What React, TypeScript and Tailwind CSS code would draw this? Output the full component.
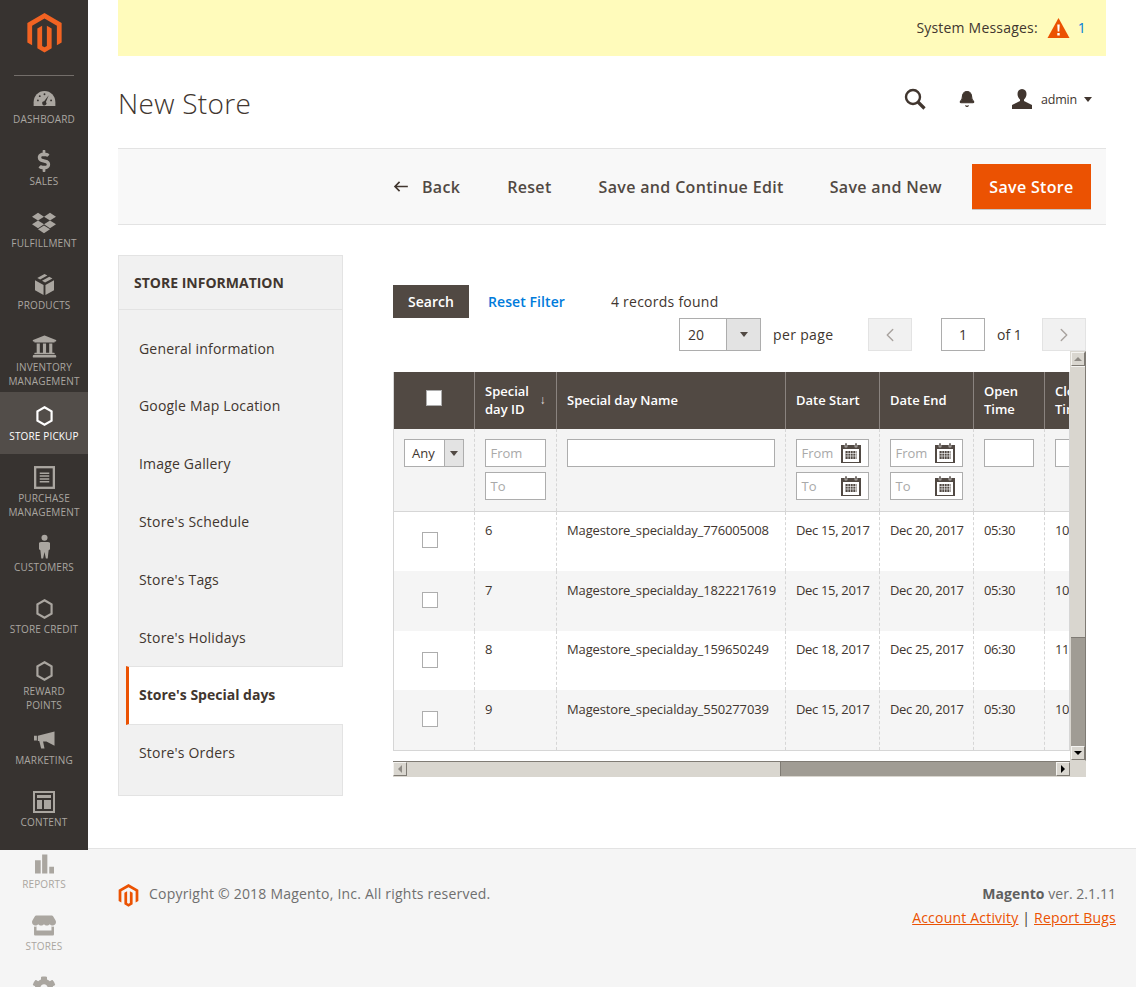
import { ReactNode } from "react";
import { FaCog, FaDollarSign, FaDropbox, FaStore, FaUniversity } from "react-icons/fa";
import { Bell, ChevronLeft, ChevronRight } from "lucide-react";

const font = "font-['Open_Sans',sans-serif]";

function MagentoLogo({ className }: { className: string }) {
  return (
    <svg viewBox="0 0 36 42" className={className} fill="#f26322">
      <polygon points="18,0 36,10.4 36,31 31,33.9 31,13.3 18,5.8 5,13.3 5,33.9 0,31 0,10.4" />
      <polygon points="20.5,34.6 18,36 15.5,34.6 15.5,13.3 10.5,16.2 10.5,37 18,41.6 25.5,37 25.5,16.2 20.5,13.3" />
    </svg>
  );
}

function Hex() {
  return (
    <svg viewBox="0 0 20 24" className="w-[17px] h-[20px]" fill="none" stroke="currentColor" strokeWidth="2.6">
      <polygon points="10,1.5 18.5,6.5 18.5,17.5 10,22.5 1.5,17.5 1.5,6.5" />
    </svg>
  );
}

function Gauge() {
  return (
    <svg viewBox="0 0 24 18" className="w-[23px] h-[17px]" fill="currentColor">
      <path d="M12 1C5.4 1 .5 6.2.5 13v4h23v-4C23.5 6.2 18.6 1 12 1z" />
      <g fill="#373330">
        <circle cx="5" cy="11" r="1" />
        <circle cx="7" cy="6.5" r="1" />
        <circle cx="12" cy="4.5" r="1" />
        <circle cx="19" cy="11" r="1" />
        <path d="M16.5 5.5l-3 7.2a2.2 2.2 0 1 1-1.9-.8z" />
      </g>
    </svg>
  );
}

function BoxIcon() {
  return (
    <svg viewBox="0 0 20 22" className="w-[19px] h-[21px]" fill="currentColor">
      <path d="M10 0l3 1.6-7.6 4.2-3-1.6zM15 2.8l3.4 1.8L10.6 9 7.4 7zM0 6.4l9 5V22l-9-5zM20 6.4V17l-9 5V11.400z" />
    </svg>
  );
}

function PurchaseIcon() {
  return (
    <svg viewBox="0 0 22 24" className="w-[21px] h-[23px]" fill="none" stroke="currentColor">
      <rect x="1.2" y="1.2" width="19.600" height="21.600" strokeWidth="2.4" />
      <path d="M6 7.500h10M6 10.500h10M6 13.500h10M6 16.500h10" strokeWidth="1.500" />
    </svg>
  );
}

function PersonIcon() {
  return (
    <svg viewBox="0 0 12 26" className="w-[11px] h-[25px]" fill="currentColor">
      <circle cx="6" cy="3.500" r="3.300" />
      <path d="M2 8h8l2 1v7l-1.500 1-1 9H7.500L6 19l-1.500 7H2.500l-1-9L0 16V9z" />
    </svg>
  );
}

function MegaphoneIcon() {
  return (
    <svg viewBox="0 0 22 18" className="w-[21px] h-[18px]" fill="currentColor">
      <path d="M0 4.500h3v5H0zM4 4.500L21.500 0v15L13 10.500H9.500L11 18H7.500L5.500 10H4z" />
    </svg>
  );
}

function ContentIcon() {
  return (
    <svg viewBox="0 0 22 22" className="w-[22px] h-[22px]" fill="currentColor">
      <path fillRule="evenodd" d="M0 0h22v22H0zM2 2v18h18V2z" />
      <path d="M4 4h14v3H4zM4 9h5v9H4zM11 9h7v9h-7z" />
    </svg>
  );
}

function ReportsIcon() {
  return (
    <svg viewBox="0 0 20 20" className="w-[19px] h-[20px]" fill="currentColor">
      <path d="M0 6h6v14H0zM7.500 0h5.500v20H7.500zM15 13h5v7h-5z" />
    </svg>
  );
}

function SearchGlyph() {
  return (
    <svg viewBox="0 0 22 22" className="w-[22px] h-[22px]" fill="none" stroke="#41362f">
      <circle cx="9" cy="9" r="7" strokeWidth="2.400" />
      <path d="M14 14l6.500 6.500" strokeWidth="3.200" />
    </svg>
  );
}

function Calendar() {
  return (
    <svg viewBox="0 0 20 20" className="w-[20px] h-[20px] shrink-0" fill="#514943">
      <path d="M0 2h20v19H0z" />
      <rect x="2" y="6" width="16" height="13" fill="#fff" />
      <rect x="4" y="0" width="2" height="4" fill="#514943" stroke="#fff" strokeWidth="0.5" />
      <rect x="14" y="0" width="2" height="4" fill="#514943" stroke="#fff" strokeWidth="0.5" />
      <path d="M4.500 8h11v8h-11z" />
      <path d="M7 8v8M9.500 8v8M12 8v8M14.500 8v8M4.500 10.500h11M4.500 13h11" stroke="#fff" strokeWidth="0.6" />
    </svg>
  );
}

const navItems: { label: string[]; icon: ReactNode; active?: boolean }[] = [
  { label: ["Dashboard"], icon: <Gauge /> },
  { label: ["Sales"], icon: <FaDollarSign className="w-[20px] h-[22px]" /> },
  { label: ["Fulfillment"], icon: <FaDropbox className="w-[24px] h-[24px]" /> },
  { label: ["Products"], icon: <BoxIcon /> },
  { label: ["Inventory", "Management"], icon: <FaUniversity className="w-[25px] h-[25px]" /> },
  { label: ["Store Pickup"], icon: <Hex />, active: true },
  { label: ["Purchase", "Management"], icon: <PurchaseIcon /> },
  { label: ["Customers"], icon: <PersonIcon /> },
  { label: ["Store Credit"], icon: <Hex /> },
  { label: ["Reward", "Points"], icon: <Hex /> },
  { label: ["Marketing"], icon: <MegaphoneIcon /> },
  { label: ["Content"], icon: <ContentIcon /> },
  { label: ["Reports"], icon: <ReportsIcon /> },
  { label: ["Stores"], icon: <FaStore className="w-[24px] h-[21px]" /> },
  { label: ["System"], icon: <FaCog className="w-[24px] h-[24px]" /> },
];

const tabs = ["General information", "Google Map Location", "Image Gallery", "Store's Schedule", "Store's Tags", "Store's Holidays"];

const rows = [
  { id: "6", name: "Magestore_specialday_776005008", start: "Dec 15, 2017", end: "Dec 20, 2017", open: "05:30", close: "10:30", h: "h-[60px]", check: "pt-[20px]", text: "pt-[9px]" },
  { id: "7", name: "Magestore_specialday_1822217619", start: "Dec 15, 2017", end: "Dec 20, 2017", open: "05:30", close: "10:30", h: "h-[60px]", check: "pt-[21px]", text: "pt-[10px]" },
  { id: "8", name: "Magestore_specialday_159650249", start: "Dec 18, 2017", end: "Dec 25, 2017", open: "06:30", close: "11:30", h: "h-[59px]", check: "pt-[21px]", text: "pt-[9px]" },
  { id: "9", name: "Magestore_specialday_550277039", start: "Dec 15, 2017", end: "Dec 20, 2017", open: "05:30", close: "10:30", h: "h-[60px]", check: "pt-[21px]", text: "pt-[10px]" },
];

const inputCls = "h-[28px] border border-[#adadad] bg-white px-[5px] text-[13px] leading-[26px] text-[#a9a9a9] flex items-center justify-between";
const thCls = "border-l border-[#8a837f] pl-[10.500px] pr-[10px] pb-[2px] text-left align-middle text-[13px] leading-[18px] font-semibold text-white";
const tdFilter = "border-l border-dashed border-[#d6d6d6] px-[10px] pt-[10px] pb-[10px] align-top";
const tdCls = "border-l border-dashed border-[#d6d6d6] pl-[10.500px] pr-[10px] align-top text-[13px] leading-[18px] text-[#41362f] whitespace-nowrap";

function DateFilter() {
  return (
    <div className="flex flex-col gap-[5px]">
      {["From", "To"].map((t) => (
        <div key={t} className={inputCls + " pr-[7px]"}>
          <span>{t}</span>
          <Calendar />
        </div>
      ))}
    </div>
  );
}

function GridTable() {
  return (
    <table className="table-fixed border-collapse w-[759px]">
      <colgroup>
        <col className="w-[80px]" />
        <col className="w-[82px]" />
        <col className="w-[229px]" />
        <col className="w-[94px]" />
        <col className="w-[94px]" />
        <col className="w-[71px]" />
        <col className="w-[109px]" />
      </colgroup>
      <thead>
        <tr className="h-[57px] bg-[#514943]">
          <th className="px-[10px] pb-[6px] text-center">
            <span className="mx-auto block w-[16px] h-[16px] bg-white border border-[#adadad]" />
          </th>
          <th className={thCls}>
            <div className="flex items-center justify-between">
              <span>Special<br />day ID</span>
              <span className="text-[12px] font-normal text-[#e3dfdc]">↓</span>
            </div>
          </th>
          <th className={thCls}>Special day Name</th>
          <th className={thCls}>Date Start</th>
          <th className={thCls}>Date End</th>
          <th className={thCls}>Open<br />Time</th>
          <th className={thCls}>Close<br />Time</th>
        </tr>
      </thead>
      <tbody>
        <tr className="h-[82px] bg-[#f4f4f4] border-b border-[#d6d6d6]">
          <td className="px-[10px] pt-[10px] pb-[10px] align-top">
            <div className="flex h-[28px] w-[60px] border border-[#adadad] bg-white">
              <span className="flex-1 pl-[7px] text-[13px] leading-[26px] text-[#41362f]">Any</span>
              <span className="w-[19px] bg-[#e3e3e3] border-l border-[#adadad] flex items-center justify-center">
                <span className="border-x-[4px] border-x-transparent border-t-[5px] border-t-[#514943]" />
              </span>
            </div>
          </td>
          <td className={tdFilter}>
            <div className="flex flex-col gap-[5px]">
              <div className={inputCls}>From</div>
              <div className={inputCls}>To</div>
            </div>
          </td>
          <td className={tdFilter}><div className={inputCls} /></td>
          <td className={tdFilter}><DateFilter /></td>
          <td className={tdFilter}><DateFilter /></td>
          <td className={tdFilter}><div className={inputCls} /></td>
          <td className={tdFilter}><div className={inputCls} /></td>
        </tr>
        {rows.map((r, i) => (
          <tr key={r.id} className={r.h + " " + (i % 2 === 1 ? "bg-[#f5f5f5]" : "bg-white")}>
            <td className={"text-center align-top pr-[8px] " + r.check}>
              <span className="mx-auto block w-[16px] h-[16px] bg-white border border-[#adadad]" />
            </td>
            <td className={tdCls + " " + r.text}>{r.id}</td>
            <td className={tdCls + " tracking-[-0.14px] " + r.text}>{r.name}</td>
            <td className={tdCls + " tracking-[-0.33px] " + r.text}>{r.start}</td>
            <td className={tdCls + " tracking-[-0.33px] " + r.text}>{r.end}</td>
            <td className={tdCls + " tracking-[-0.4px] " + r.text}>{r.open}</td>
            <td className={tdCls + " tracking-[-0.4px] " + r.text}>{r.close}</td>
          </tr>
        ))}
      </tbody>
    </table>
  );
}

function ScrollBtn({ dir }: { dir: "up" | "down" | "left" | "right" }) {
  const arrow =
    dir === "up"
      ? "border-x-[4px] border-x-transparent border-b-[4px] border-b-[#8f8b85]"
      : dir === "down"
        ? "border-x-[4px] border-x-transparent border-t-[4px] border-t-black"
        : dir === "left"
          ? "border-y-[4px] border-y-transparent border-r-[4px] border-r-[#8f8b85]"
          : "border-y-[4px] border-y-transparent border-l-[4px] border-l-black";
  return (
    <div className="w-[14px] h-[14px] shrink-0 bg-[#d9d6cf] border-t border-l border-t-[#f4f3f0] border-l-[#f4f3f0] border-r border-b border-r-[#7f7b74] border-b-[#7f7b74] flex items-center justify-center">
      <span className={arrow} />
    </div>
  );
}

export default function App() {
  return (
    <div className={"h-[987px] w-[1136px] overflow-hidden bg-white text-[#41362f] " + font}>
      <div className="flex h-[850px]">
        {/* Left menu */}
        <aside className="relative z-10 w-[88px] shrink-0 h-[850px] bg-[#373330]">
          <div className="h-[75px] flex justify-center pt-[13px]">
            <MagentoLogo className="w-[35px] h-[40px]" />
          </div>
          <div className="mx-[14px] h-px bg-[#736e6a]" />
          <nav className="-mt-px">
            {navItems.map((item) => (
              <div
                key={item.label.join(" ")}
                className={
                  "flex flex-col items-center min-h-[62px] pt-[11px] pb-[4px] " +
                  (item.active ? "bg-[#524d49] text-white" : "text-[#aaa6a0]")
                }
              >
                <div className="h-[25px] mb-[1px] flex items-center justify-center">{item.icon}</div>
                <div className="text-center text-[10px] leading-[14px] uppercase tracking-[0.15px] whitespace-nowrap">
                  {item.label.map((l) => (
                    <div key={l}>{l}</div>
                  ))}
                </div>
              </div>
            ))}
          </nav>
        </aside>

        <main className="flex-1 pl-[30px] pr-[30px]">
          <div className="h-[56px] bg-[#fffbbb] flex items-center justify-end pr-[20px] pb-[1px] text-[14px] tracking-[0.2px]">
            <span className="mr-[9px]">System Messages:</span>
            <svg viewBox="0 0 22 20" className="w-[23px] h-[20px] mr-[8px]">
              <path d="M11 0l11 20H0z" fill="#eb5202" />
              <path d="M9.800 6.500h2.400l-.4 7h-1.600zM9.800 15h2.400v2.400H9.800z" fill="#fff" />
            </svg>
            <span className="text-[#007bdb]">1</span>
          </div>

          <div className="h-[92px] flex items-start justify-between">
            <h1 className="mt-[28px] text-[28px] leading-[38px] font-light tracking-[0.3px] text-[#41362f]">New Store</h1>
            <div className="flex items-center mt-[32px] text-[#41362f]">
              <SearchGlyph />
              <Bell className="w-[18px] h-[18px] ml-[32px]" fill="#41362f" strokeWidth={1.500} />
              <svg viewBox="0 0 20 20" className="w-[20px] h-[20px] ml-[36px]" fill="#41362f">
                <path d="M10 0c3 0 4.500 2.200 4.500 5 0 2.400-1.200 4.500-2.500 5.500v1.500l8 4v4H0v-4l8-4v-1.500C6.700 9.500 5.500 7.400 5.500 5 5.500 2.200 7 0 10 0z" />
              </svg>
              <span className="ml-[9px] text-[12.500px] tracking-[-0.2px] mt-[2px]">admin</span>
              <span className="ml-[7px] mr-[14px] border-x-[4px] border-x-transparent border-t-[5px] border-t-[#41362f]" />
            </div>
          </div>

          <div className="h-[77px] bg-[#f8f8f8] border-y border-[#e3e3e3] flex items-center justify-end pr-[15px] text-[16px] tracking-[0.33px] font-semibold text-[#514943]">
            <svg viewBox="0 0 16 12" className="w-[15px] h-[11px] mr-[14px]" fill="none" stroke="#41362f" strokeWidth="1.800">
              <path d="M16 6H2M7 1L2 6l5 5" />
            </svg>
            <span className="mr-[47px]">Back</span>
            <span className="mr-[47px]">Reset</span>
            <span className="mr-[46px]">Save and Continue Edit</span>
            <span className="mr-[30px]">Save and New</span>
            <button className="h-[45px] w-[119px] bg-[#eb5202] text-white font-semibold shadow-[0_1px_0_rgba(0,0,0,0.2)]">Save Store</button>
          </div>

          <div className="flex mt-[30px]">
            {/* Tabs */}
            <div className="w-[225px] shrink-0 h-[541px] bg-[#f1f1f1] border border-[#e3e3e3] flex flex-col">
              <div className="h-[54px] shrink-0 border-b border-[#e3e3e3] px-[15px] flex items-center text-[14px] font-bold uppercase text-[#41362f]">
                Store Information
              </div>
              <div className="pt-[10px]">
                {tabs.map((t, i) => (
                  <div key={t} className={(i === 0 ? "h-[57px]" : "h-[58px] pb-[2px]") + " flex items-center pl-[20px] text-[14px] tracking-[0.18px] text-[#41362f]"}>{t}</div>
                ))}
              </div>
              <div className="relative -mt-[1px] ml-[7px] h-[59px] pb-[2px] bg-white border-y border-[#e3e3e3] border-l-[3px] border-l-[#eb5202] flex items-center pl-[10px] text-[14px] font-bold text-[#41362f] -mr-px">
                Store's Special days
              </div>
              <div className="h-[56px] pb-[2px] flex items-center pl-[20px] text-[14px] tracking-[0.18px] text-[#41362f]">Store's Orders</div>
            </div>

            {/* Grid */}
            <div className="ml-[50px] flex-1 pt-[30px] pr-[20px]">
              <div className="flex items-center h-[33px]">
                <button className="h-[33px] w-[76px] bg-[#514943] text-white text-[14px] font-semibold">Search</button>
                <span className="ml-[19px] text-[14px] font-semibold tracking-[0.08px] text-[#007bdb]">Reset Filter</span>
                <span className="ml-[46px] text-[14px] tracking-[0.25px]">4 records found</span>
              </div>
              <div className="flex items-center h-[33px] text-[14px]">
                <div className="ml-[286px] flex h-[33px] w-[82px] border border-[#adadad]">
                  <span className="flex-1 pl-[8px] leading-[31px]">20</span>
                  <span className="w-[34px] bg-[#e3e3e3] border-l border-[#adadad] flex items-center justify-center">
                    <span className="border-x-[4px] border-x-transparent border-t-[5px] border-t-[#514943]" />
                  </span>
                </div>
                <span className="ml-[12px] w-[60px] whitespace-nowrap tracking-[0.35px]">per page</span>
                <span className="ml-[35px] w-[44px] h-[33px] bg-[#f1f1f1] border border-[#e3e3e3] flex items-center justify-center text-[#a8a29e]">
                  <ChevronLeft className="w-[22px] h-[22px]" strokeWidth={1.500} />
                </span>
                <span className="ml-[29px] w-[44px] h-[33px] border border-[#adadad] flex items-center justify-center">1</span>
                <span className="ml-[12px]">of 1</span>
                <span className="ml-[20px] w-[44px] h-[33px] bg-[#f1f1f1] border border-[#e3e3e3] flex items-center justify-center text-[#a8a29e]">
                  <ChevronRight className="w-[22px] h-[22px]" strokeWidth={1.500} />
                </span>
              </div>

              <div className="mt-0 grid grid-cols-[677px_16px] grid-rows-[410px_16px] w-[693px]">
                <div className="overflow-hidden pt-[21px]">
                  <div className="border-x border-b border-[#d6d6d6] w-[677px] overflow-hidden h-[379px]">
                    <GridTable />
                  </div>
                </div>
                <div className="bg-[#a09c94] flex flex-col border border-[#d9d6cf] border-r-[#7f7b74]">
                  <ScrollBtn dir="up" />
                  <div className="h-[272px] bg-[#d9d6cf] border-b border-[#7f7b74] border-t border-t-[#f4f3f0]" />
                  <div className="flex-1" />
                  <ScrollBtn dir="down" />
                </div>
                <div className="bg-[#a09c94] flex border-y border-t-[#7f7b74] border-b-[#d9d6cf]">
                  <ScrollBtn dir="left" />
                  <div className="w-[374px] bg-[#d9d6cf] border-r border-[#7f7b74]" />
                  <div className="flex-1" />
                  <ScrollBtn dir="right" />
                </div>
                <div className="bg-[#d9d6cf]" />
              </div>
            </div>
          </div>
        </main>
      </div>

      <footer className="-mt-[2px] h-[139px] bg-[#f5f5f5] border-t border-[#e3e3e3] pl-[118px] pr-[20px] pt-[34px] flex justify-between text-[14px] text-[#6f6f6f]">
        <div className="flex items-start">
          <MagentoLogo className="w-[21px] h-[23px] mt-[1px] [&_polygon]:fill-[#eb5202]" />
          <span className="ml-[10px] leading-[22px] tracking-[0.21px]">Copyright © 2018 Magento, Inc. All rights reserved.</span>
        </div>
        <div className="text-right leading-[24px] -mt-[1px] tracking-[0.05px]">
          <div><b className="font-bold text-[#5f5f5f]">Magento</b> ver. 2.1.11</div>
          <div className="text-[#41362f] tracking-[0.2px]">
            <a className="underline text-[#eb5202]">Account Activity</a> | <a className="underline text-[#eb5202]">Report Bugs</a>
          </div>
        </div>
      </footer>
    </div>
  );
}
